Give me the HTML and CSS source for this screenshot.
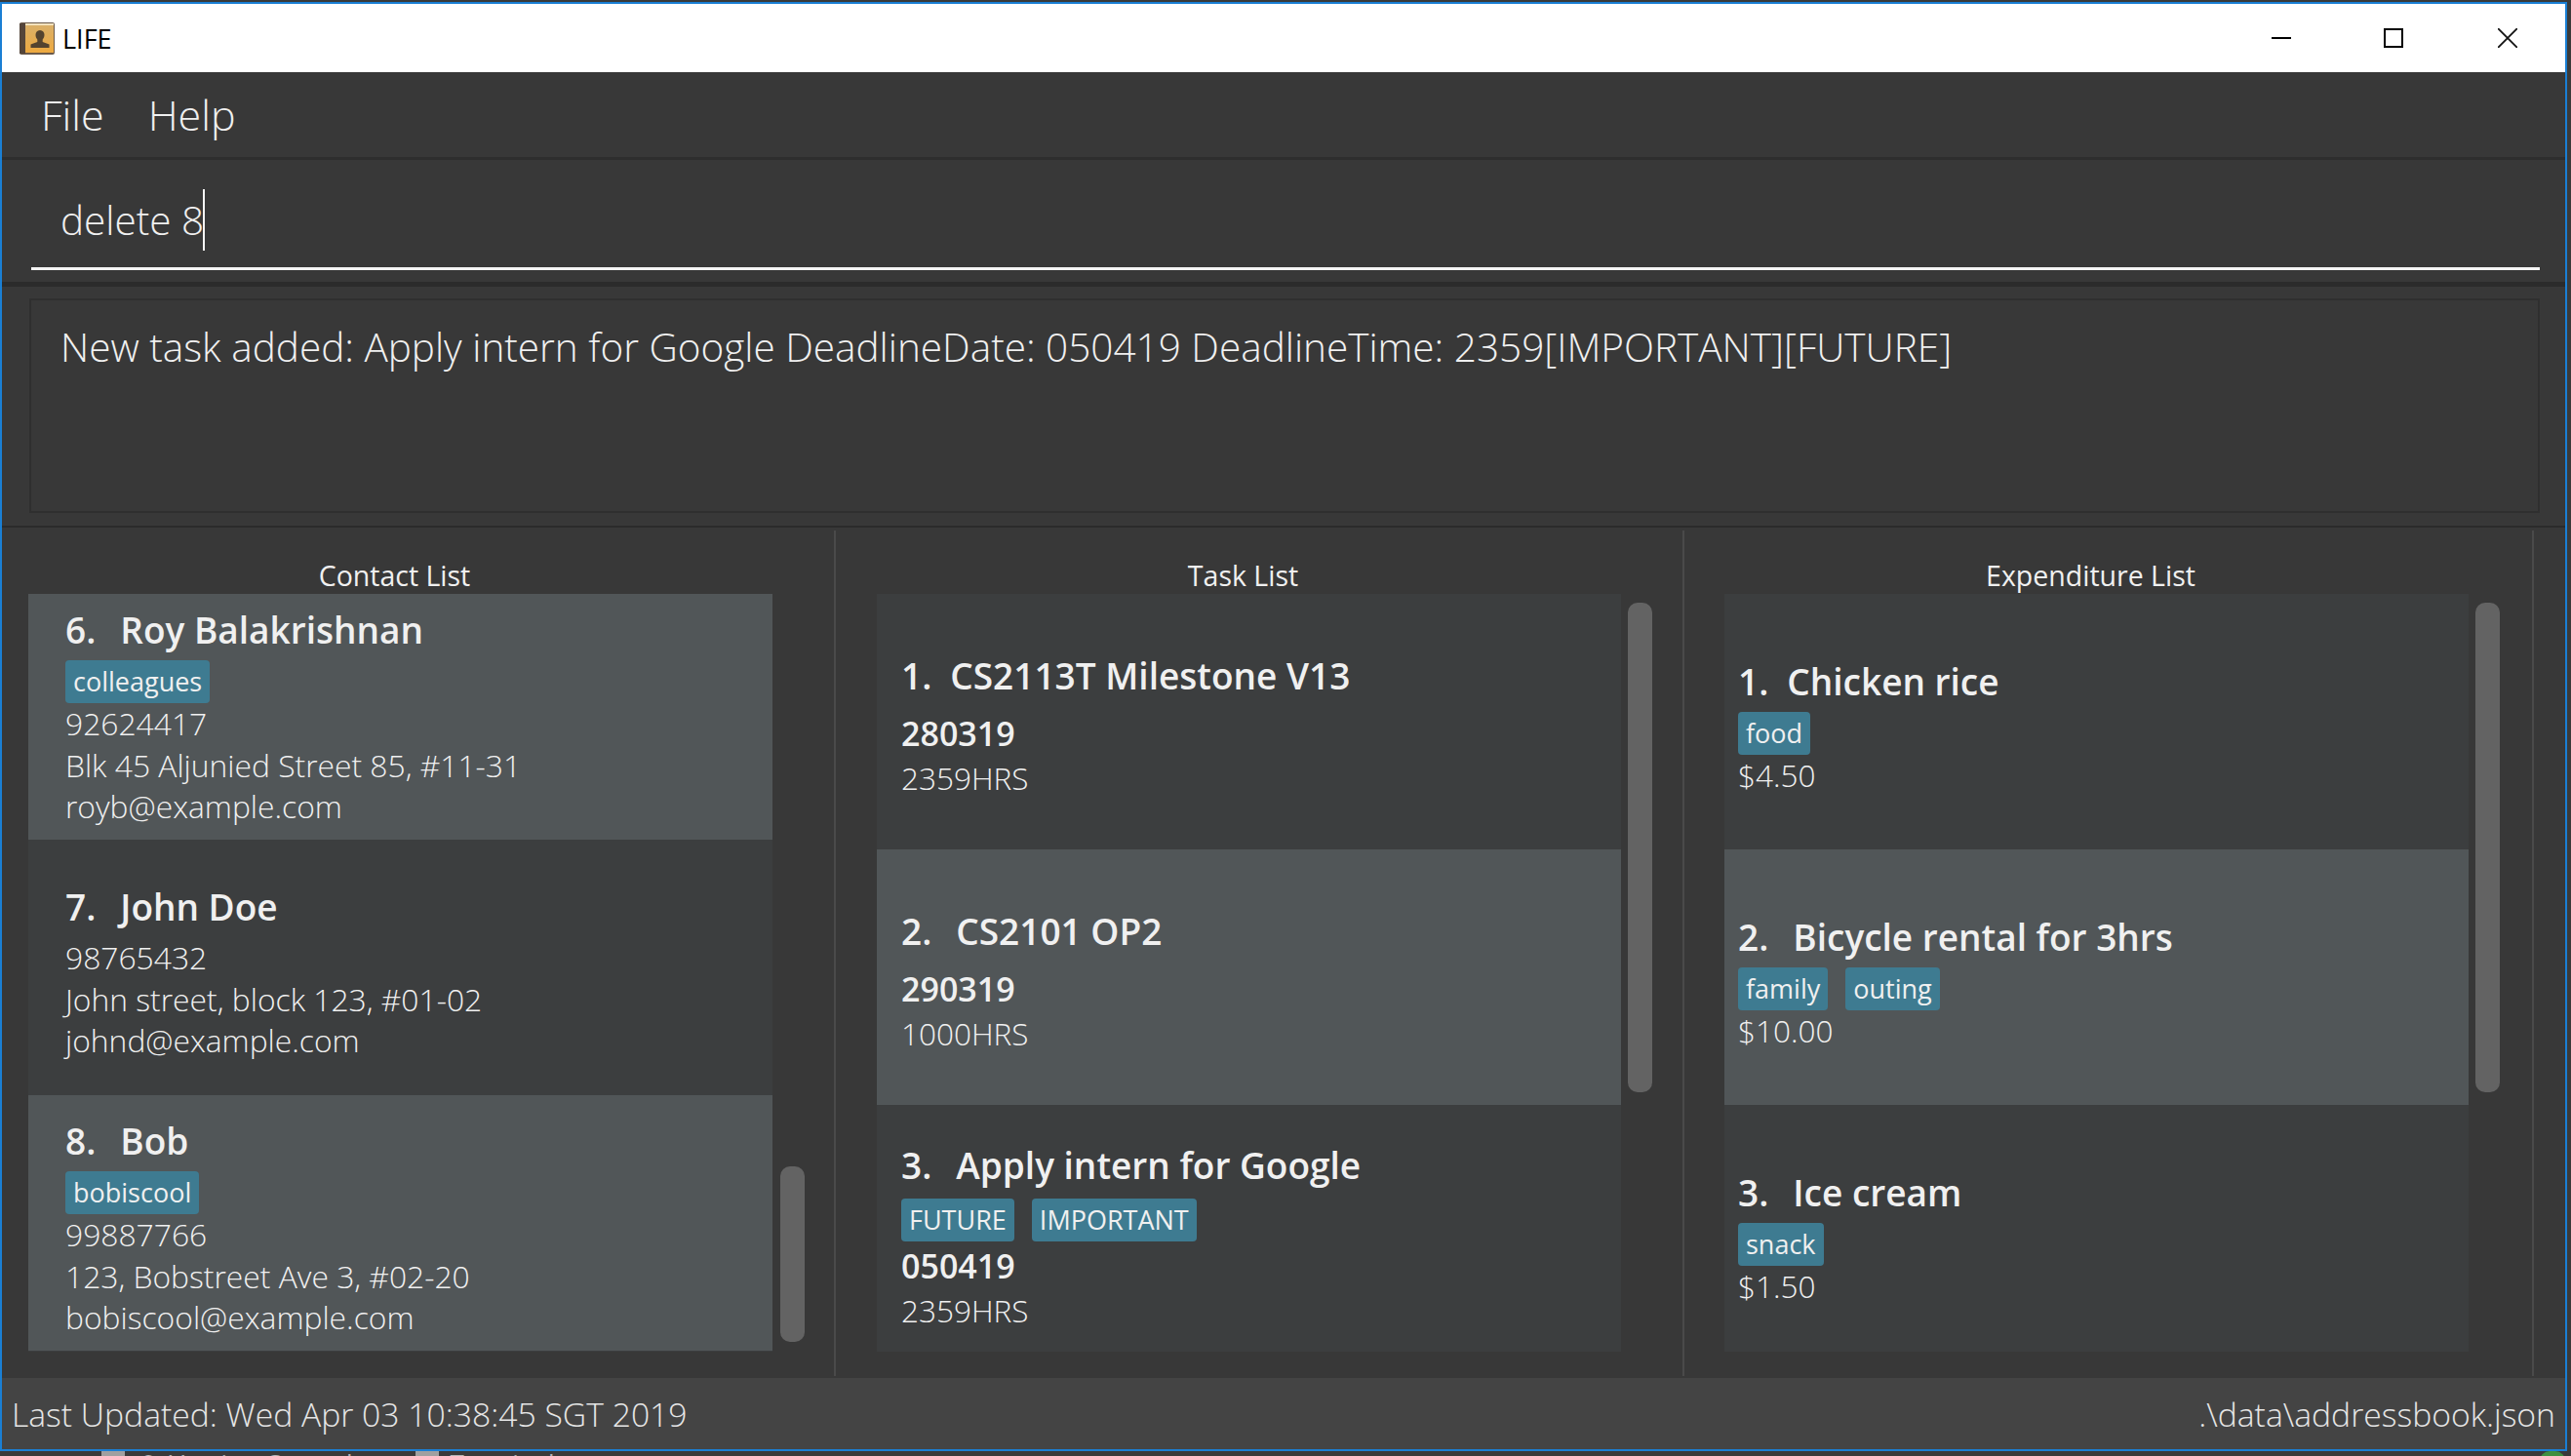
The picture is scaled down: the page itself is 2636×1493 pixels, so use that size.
FILE: index.html
```html
<!DOCTYPE html>
<html lang="en">
<head>
  <meta charset="UTF-8" />
  <title>LIFE</title>
  <link rel="stylesheet" href="styles.css">
</head>
<body>
  <div class="window">
    <div class="titlebar">
      <svg class="app-icon" viewBox="0 0 36 33" width="36" height="33">
        <defs>
          <linearGradient id="cover" x1="0" y1="0" x2="0" y2="1">
            <stop offset="0" stop-color="#d9b06a"/>
            <stop offset="1" stop-color="#eea93f"/>
          </linearGradient>
        </defs>
        <rect x="0" y="0" width="36" height="33" rx="2" fill="#6b5a4a"/>
        <rect x="0" y="1" width="6" height="31" fill="#54453a"/>
        <rect x="6" y="2" width="29" height="29" fill="url(#cover)"/>
        <rect x="6" y="1" width="29" height="2" fill="#f3e3bf"/>
        <path d="M21 8c-3 0-4.500 2.200-4.500 4.800 0 2 .8 3.700 1.800 4.700v2.500l-6.800 2.600v3.400h19v-3.400l-6.800-2.600v-2.500c1-1 1.800-2.700 1.800-4.700C25.500 10.200 24 8 21 8z" fill="#54432f"/>
      </svg>
      <span class="app-name">LIFE</span>
      <div class="win-controls">
        <svg viewBox="0 0 20 20" width="20" height="20"><path d="M0 10h20" stroke="#000" stroke-width="2"/></svg>
        <svg class="max-btn" viewBox="0 0 20 20" width="20" height="20"><rect x="1" y="1" width="18" height="18" fill="none" stroke="#000" stroke-width="2"/></svg>
        <svg viewBox="0 0 20 20" width="20" height="20"><path d="M0 0l20 20M20 0L0 20" stroke="#111" stroke-width="1.800"/></svg>
      </div>
    </div>

    <div class="menubar">
      <span>File</span>
      <span>Help</span>
    </div>

    <div class="command-box">
      <div class="command-input"><span>delete 8</span><i class="caret"></i></div>
    </div>

    <div class="result-pane">
      <div class="result-box">New task added: Apply intern for Google DeadlineDate: 050419 DeadlineTime: 2359[IMPORTANT][FUTURE]</div>
    </div>

    <div class="lists">
      <section class="pane pane-contacts">
        <div class="pane-title">Contact List</div>
        <div class="list-wrap">
          <div class="list scrolled">
            <div class="card light">
              <div class="card-name"><span class="num">6.</span>Roy Balakrishnan</div>
              <div class="tags"><span class="tag">colleagues</span></div>
              <div class="line">92624417</div>
              <div class="line">Blk 45 Aljunied Street 85, #11-31</div>
              <div class="line">royb@example.com</div>
            </div>
            <div class="card">
              <div class="card-name"><span class="num">7.</span>John Doe</div>
              <div class="line">98765432</div>
              <div class="line">John street, block 123, #01-02</div>
              <div class="line">johnd@example.com</div>
            </div>
            <div class="card light">
              <div class="card-name"><span class="num">8.</span>Bob</div>
              <div class="tags"><span class="tag">bobiscool</span></div>
              <div class="line">99887766</div>
              <div class="line">123, Bobstreet Ave 3, #02-20</div>
              <div class="line">bobiscool@example.com</div>
            </div>
          </div>
          <div class="track"><div class="thumb thumb-contacts"></div></div>
        </div>
      </section>

      <section class="pane pane-tasks">
        <div class="pane-title">Task List</div>
        <div class="list-wrap">
          <div class="list">
            <div class="card task">
              <div class="card-name"><span class="num num-one">1.</span>CS2113T Milestone V13</div>
              <div class="date">280319</div>
              <div class="line">2359HRS</div>
            </div>
            <div class="card task light">
              <div class="card-name"><span class="num">2.</span>CS2101 OP2</div>
              <div class="date">290319</div>
              <div class="line">1000HRS</div>
            </div>
            <div class="card task">
              <div class="card-name"><span class="num">3.</span>Apply intern for Google</div>
              <div class="tags"><span class="tag">FUTURE</span><span class="tag">IMPORTANT</span></div>
              <div class="date">050419</div>
              <div class="line">2359HRS</div>
            </div>
          </div>
          <div class="track"><div class="thumb thumb-lists"></div></div>
        </div>
      </section>

      <section class="pane pane-spending">
        <div class="pane-title">Expenditure List</div>
        <div class="list-wrap">
          <div class="list">
            <div class="card spend">
              <div class="card-name"><span class="num num-one">1.</span>Chicken rice</div>
              <div class="tags"><span class="tag">food</span></div>
              <div class="line">$4.50</div>
            </div>
            <div class="card spend light">
              <div class="card-name"><span class="num">2.</span>Bicycle rental for 3hrs</div>
              <div class="tags"><span class="tag">family</span><span class="tag">outing</span></div>
              <div class="line">$10.00</div>
            </div>
            <div class="card spend">
              <div class="card-name"><span class="num">3.</span>Ice cream</div>
              <div class="tags"><span class="tag">snack</span></div>
              <div class="line">$1.50</div>
            </div>
          </div>
          <div class="track"><div class="thumb thumb-lists"></div></div>
        </div>
      </section>
    </div>

    <div class="statusbar">
      <span>Last Updated: Wed Apr 03 10:38:45 SGT 2019</span>
      <span>.\data\addressbook.json</span>
    </div>
  </div>

  <div class="taskbar">
    <span class="tool-icon first"></span>
    <span class="tool-text">9: Version Control</span>
    <span class="tool-icon second"></span>
    <span class="tool-text">Terminal</span>
    <span class="tray-dot"></span>
  </div>
</body>
</html>
```

FILE: styles.css
```css
html, body {
  margin: 0;
  height: 100%;
  overflow: hidden;
}
body {
  background: #3a3a3a;
  font-family: "Open Sans", "Noto Sans", sans-serif;
  font-weight: 300;
  color: #f0f0f0;
  padding-top: 2px;
  box-sizing: border-box;
}
.window {
  width: 2632px;
  height: 1486px;
  box-sizing: border-box;
  border: 2px solid #1a7fd4;
  background: #383838;
  display: flex;
  flex-direction: column;
}
.titlebar {
  height: 70px;
  flex: none;
  background: #fff;
  color: #000;
  display: flex;
  align-items: center;
  padding-left: 18px;
}
.app-icon {
  margin-right: 8px;
}
.app-name {
  font-weight: 400;
  font-size: 27px;
}
.win-controls {
  margin-left: auto;
  display: flex;
  gap: 95px;
  padding-right: 49px;
}
.max-btn {
  margin-right: 2px;
}
.menubar {
  height: 90px;
  flex: none;
  box-sizing: border-box;
  display: flex;
  align-items: center;
  gap: 45px;
  padding-left: 40px;
  font-size: 43px;
  border-bottom: 3px solid #2e2e2e;
}
.command-box {
  height: 130px;
  flex: none;
  box-sizing: border-box;
  padding: 0 26px 0 30px;
  border-bottom: 5px solid #2b2b2b;
}
.command-input {
  height: 113px;
  box-sizing: border-box;
  border-bottom: 3px solid #f4f4f4;
  padding: 12px 0 0 30px;
  font-size: 40.500px;
  display: flex;
  align-items: center;
}
.caret {
  width: 2px;
  height: 63px;
  background: #f4f4f4;
  margin-left: -1px;
}
.result-pane {
  height: 247px;
  flex: none;
  box-sizing: border-box;
  padding: 12px 26px 0 28px;
  border-bottom: 2px solid #2b2b2b;
}
.result-box {
  height: 220px;
  box-sizing: border-box;
  border: 2px solid #2f2f2f;
  padding: 20px 30px;
  font-size: 40.500px;
}
.lists {
  flex: 1;
  display: grid;
  grid-template-columns: 855px 870px 871px 1fr;
  padding-top: 3px;
}
.pane {
  border-right: 2px solid #4a4a4a;
  height: 867px;
  box-sizing: border-box;
}
.pane-contacts {
  padding-left: 27px;
}
.pane-tasks {
  padding-left: 42px;
}
.pane-spending {
  padding-left: 41px;
}
.pane-title {
  width: 751px;
  height: 65px;
  box-sizing: border-box;
  padding-top: 26px;
  text-align: center;
  font-size: 28.500px;
  font-weight: 400;
  line-height: 40px;
}
.list-wrap {
  display: flex;
  height: 777px;
}
.list {
  width: 763px;
  overflow: hidden;
  background: #3c3e3f;
}
.scrolled .card:first-child {
  margin-top: -10px;
}
.card {
  height: 262px;
  box-sizing: border-box;
  padding: 4px 0 0 38px;
  display: flex;
  flex-direction: column;
  justify-content: center;
  align-items: flex-start;
}
.task {
  padding-left: 25px;
}
.spend {
  padding-left: 14px;
}
.light {
  background: #515658;
}
.card-name {
  font-size: 37px;
  font-weight: 550;
  line-height: 56px;
  margin: 3px 0;
}
.task .card-name {
  margin: 0 0 6px;
}
.num {
  margin-right: 25px;
}
.num-one {
  margin-right: 19px;
}
.tags {
  display: flex;
  gap: 18px;
}
.tag {
  background: #3e7b91;
  border-radius: 4px;
  font-size: 27px;
  font-weight: 400;
  line-height: 44px;
  padding: 0 8px;
}
.line {
  font-size: 31.500px;
  line-height: 42.500px;
}
.pane-contacts .line {
  font-size: 31.800px;
}
.date {
  font-size: 34px;
  font-weight: 550;
  line-height: 50px;
}
.track {
  width: 25px;
  margin-left: 7px;
}
.pane-contacts .track {
  margin-left: 8px;
}
.thumb {
  background: #636363;
  border-radius: 10px;
}
.thumb-contacts {
  margin-top: 587px;
  height: 180px;
}
.thumb-lists {
  margin-top: 9px;
  height: 502px;
}
.statusbar {
  height: 73px;
  flex: none;
  box-sizing: border-box;
  background: #444;
  display: flex;
  justify-content: space-between;
  align-items: center;
  padding: 0 10px;
  font-size: 33.700px;
  color: #e6e6e6;
}
.taskbar {
  height: 5px;
  width: 2632px;
  overflow: hidden;
  display: flex;
  align-items: flex-start;
  font-size: 26px;
  font-weight: 400;
  line-height: 30px;
  color: #b5b5b5;
}
.tool-text {
  margin-top: -3px;
}
.tool-icon {
  width: 24px;
  height: 5px;
  background: #a0a0a0;
}
.tool-icon.first {
  margin: 0 17px 0 104px;
}
.tool-icon.second {
  margin: 0 12px 0 64px;
}
.tray-dot {
  width: 26px;
  height: 10px;
  margin-left: auto;
  margin-right: 2px;
  border-radius: 13px 13px 0 0;
  background: #3f8f3f;
}
```
